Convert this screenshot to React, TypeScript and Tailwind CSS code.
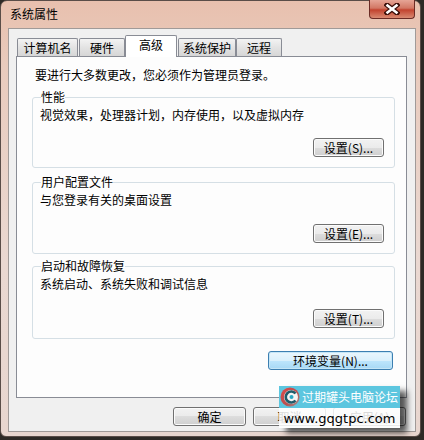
import React from "react";

const font = { fontFamily: '"Noto Sans CJK SC", "Liberation Sans", sans-serif' };

function Btn({ label, w, focused }: { label: string; w: string; focused?: boolean }) {
  return (
    <div
      className={
        "h-[19px] flex items-center justify-center rounded-[3px] border text-[12px] leading-none text-black " +
        w +
        (focused
          ? " border-[#3c7fb1] bg-[linear-gradient(#eaf6fd_0%,#d9f0fc_50%,#bee6fd_50%,#a7d9f5_100%)] shadow-[inset_0_0_0_1px_#c5e6f7]"
          : " border-[#707070] bg-[linear-gradient(#f2f2f2_0%,#ebebeb_50%,#dddddd_50%,#cfcfcf_100%)] shadow-[inset_0_0_0_1px_#fbfbfb]")
      }
    >
      {label}
    </div>
  );
}

function Group({
  legend,
  desc,
  btn,
  mt,
  btnMt,
}: {
  legend: string;
  desc: string;
  btn: string;
  mt: string;
  btnMt: string;
}) {
  return (
    <fieldset
      className={
        "ml-[15px] w-[363px] border border-[#d5dfe5] rounded-[3px] px-[7px] pb-[10px] flex flex-col " + mt
      }
    >
      <legend className="ml-[1px] px-[0px] text-[12px] leading-[16px] text-black">{legend}</legend>
      <div className="mt-[2px] text-[12px] leading-[16px] text-black">{desc}</div>
      <div className={"flex justify-end pr-[3px] " + btnMt}>
        <Btn label={btn} w="w-[71px]" />
      </div>
    </fieldset>
  );
}

function Logo() {
  return (
    <svg width="20" height="20" viewBox="0 0 20 20">
      <defs>
        <linearGradient id="lg" x1="0" y1="0" x2="1" y2="1">
          <stop offset="0" stopColor="#e04848" />
          <stop offset="0.6" stopColor="#b85050" />
          <stop offset="1" stopColor="#9a9a9a" />
        </linearGradient>
      </defs>
      <circle cx="10" cy="10" r="9.5" fill="url(#lg)" />
      <circle cx="11" cy="10" r="7" fill="#f4f4f4" />
      <path d="M15.5 6.5 A5.5 5.5 0 1 0 15.5 13.5" fill="none" stroke="#1f5b6a" strokeWidth="2.6" />
      <circle cx="11.5" cy="10" r="2" fill="#2aa7c4" />
    </svg>
  );
}

function CloseX() {
  return (
    <svg width="16" height="12" viewBox="0 0 16 12">
      <path d="M3 2 L13 10 M13 2 L3 10" stroke="#3a0d08" strokeWidth="5" strokeLinecap="square" />
      <path d="M3.5 2.5 L12.5 9.5 M12.5 2.5 L3.5 9.5" stroke="#ffffff" strokeWidth="2.6" strokeLinecap="square" />
    </svg>
  );
}

export default function App() {
  return (
    <div className="relative w-[424px] h-[440px] overflow-hidden bg-[#2e2a26]" style={font}>
      <div className="w-[421px] h-[437px] rounded-t-[7px] rounded-b-[6px] border border-[#5a4d48] bg-[linear-gradient(180deg,#e8c0ae_0%,#e9cbbd_15%,#ead8d1_60%,#e8d6cf_100%)] flex flex-col">
        {/* title bar */}
        <div className="h-[27px] flex items-start">
          <div className="pl-[9px] pt-[5px] text-[12px] leading-[16px] text-black">系统属性</div>
          <div className="ml-auto mr-[5px] -mt-px w-[46px] h-[19px] rounded-b-[4px] border border-[#6b2b25] border-t-0 bg-[linear-gradient(#e6a596_0%,#d27764_45%,#c2432f_55%,#d98a72_100%)] flex items-center justify-center">
            <CloseX />
          </div>
        </div>
        {/* client area */}
        <div className="ml-[7px] mr-[4px] mb-[4px] flex-1 border border-[#a09a98] bg-[#f0f0f0] flex flex-col">
          {/* tabs */}
          <div className="relative z-10 mt-[6px] h-[21px] pl-[8px] flex items-end text-[12px] text-black">
            <div className="w-[61px] h-[18px] border border-b-0 border-[#898c95] rounded-t-[2px] bg-[linear-gradient(#f3f3f3,#e3e3e3_50%,#d6d6d6)] flex items-center justify-center leading-none">
              计算机名
            </div>
            <div className="ml-px w-[46px] h-[18px] border border-b-0 border-[#898c95] rounded-t-[2px] bg-[linear-gradient(#f3f3f3,#e3e3e3_50%,#d6d6d6)] flex items-center justify-center leading-none">
              硬件
            </div>
            <div className="w-[52px] h-[22px] -mb-px border border-b-0 border-[#898c95] rounded-t-[2px] bg-white flex items-start justify-center pt-[3px] leading-none">
              高级
            </div>
            <div className="ml-px w-[58px] h-[18px] border border-b-0 border-[#898c95] rounded-t-[2px] bg-[linear-gradient(#f3f3f3,#e3e3e3_50%,#d6d6d6)] flex items-center justify-center leading-none">
              系统保护
            </div>
            <div className="w-[46px] h-[18px] border border-b-0 border-[#898c95] rounded-t-[2px] bg-[linear-gradient(#f3f3f3,#e3e3e3_50%,#d6d6d6)] flex items-center justify-center leading-none">
              远程
            </div>
          </div>
          {/* panel */}
          <div className="ml-[7px] w-[391px] h-[342px] border border-[#898c95] bg-[#fdfdfd] flex flex-col">
            <div className="mt-[10px] pl-[18px] text-[12px] leading-[16px] text-black">
              要进行大多数更改，您必须作为管理员登录。
            </div>
            <Group legend="性能" desc="视觉效果，处理器计划，内存使用，以及虚拟内存" btn="设置(S)..." mt="mt-[6px]" btnMt="mt-[15px]" />
            <Group legend="用户配置文件" desc="与您登录有关的桌面设置" btn="设置(E)..." mt="mt-[6px]" btnMt="mt-[16px]" />
            <Group legend="启动和故障恢复" desc="系统启动、系统失败和调试信息" btn="设置(T)..." mt="mt-[4px]" btnMt="mt-[17px]" />
            <div className="mt-[12px] flex justify-end pr-[13px]">
              <Btn label="环境变量(N)..." w="w-[125px]" focused />
            </div>
          </div>
          {/* bottom buttons */}
          <div className="mt-[9px] pl-[164px] flex gap-[7px]">
            <Btn label="确定" w="w-[73px]" />
            <Btn label="取消" w="w-[73px]" />
            <Btn label="应用(A)" w="w-[73px]" />
          </div>
        </div>
      </div>

      {/* watermark overlay */}
      <div className="absolute left-[279px] top-[386px] w-[121px] shadow-[7px_5px_6px_rgba(0,0,0,0.65)]">
        <div className="h-[22px] bg-[#5cc6df] flex items-center gap-[2px] pl-[1px]">
          <Logo />
          <span className="text-[12px] leading-none text-white">过期罐头电脑论坛</span>
        </div>
        <div className="h-[20px] bg-white/85 flex items-center justify-center">
          <span className="text-[13px] leading-none text-black" style={{ fontFamily: '"DejaVu Sans", sans-serif' }}>
            www.gqgtpc.com
          </span>
        </div>
      </div>
    </div>
  );
}
